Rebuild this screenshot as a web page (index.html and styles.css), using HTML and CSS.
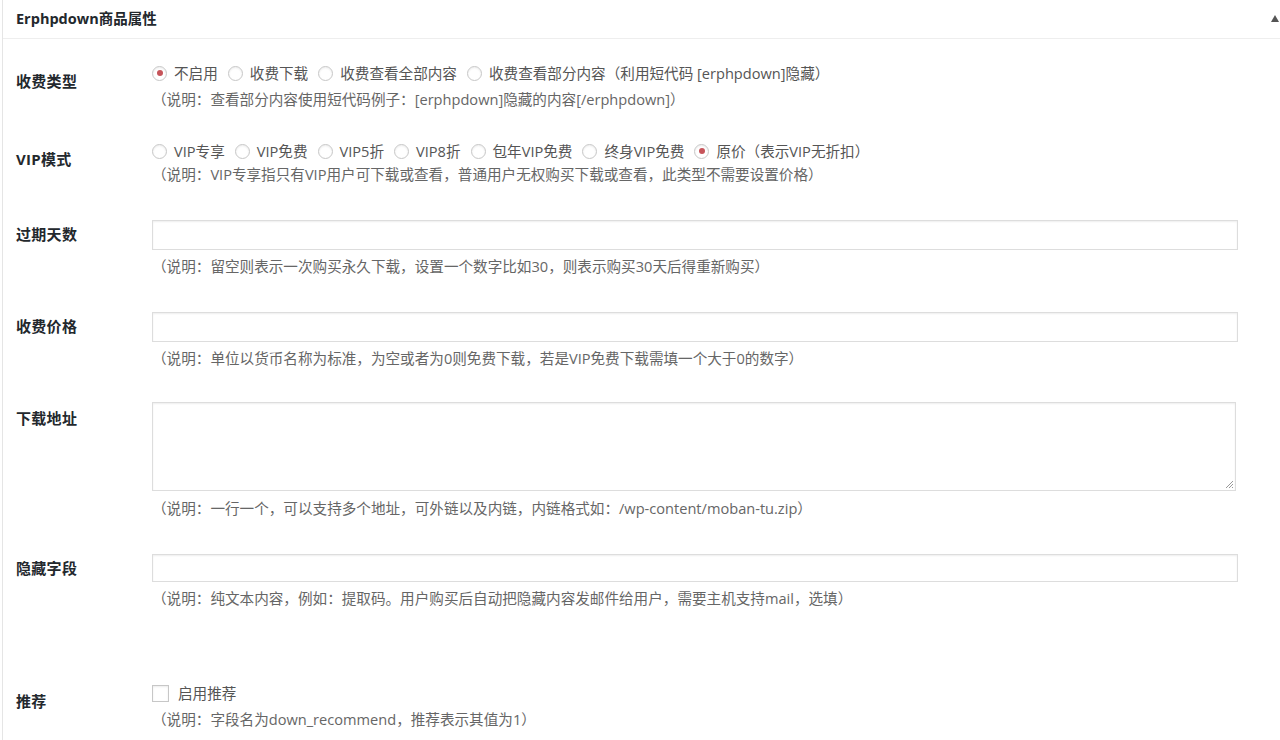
FILE: index.html
```html
<!DOCTYPE html>
<html lang="zh-CN">
<head>
<meta charset="utf-8">
<title>Erphpdown商品属性</title>
<link rel="stylesheet" href="styles.css">
</head>
<body>
<div class="postbox">
  <div class="hndle">
    <h2 class="title">Erphpdown商品属性</h2>
    <svg class="toggle" width="8" height="7" viewBox="0 0 8 7"><path d="M4 0 L8 7 L0 7 Z" fill="#555"/></svg>
  </div>
  <div class="inside">
    <div class="row">
      <div class="th">收费类型</div>
      <div class="td">
        <div class="options">
          <label class="opt"><span class="radio checked"></span>不启用</label>
          <label class="opt"><span class="radio"></span>收费下载</label>
          <label class="opt"><span class="radio"></span>收费查看全部内容</label>
          <label class="opt"><span class="radio"></span>收费查看部分内容（利用短代码 [erphpdown]隐藏）</label>
        </div>
        <p class="desc">（说明：查看部分内容使用短代码例子：[erphpdown]隐藏的内容[/erphpdown]）</p>
      </div>
    </div>
    <div class="row">
      <div class="th">VIP模式</div>
      <div class="td">
        <div class="options">
          <label class="opt"><span class="radio"></span>VIP专享</label>
          <label class="opt"><span class="radio"></span>VIP免费</label>
          <label class="opt"><span class="radio"></span>VIP5折</label>
          <label class="opt"><span class="radio"></span>VIP8折</label>
          <label class="opt"><span class="radio"></span>包年VIP免费</label>
          <label class="opt"><span class="radio"></span>终身VIP免费</label>
          <label class="opt"><span class="radio checked"></span>原价（表示VIP无折扣）</label>
        </div>
        <p class="desc tight">（说明：VIP专享指只有VIP用户可下载或查看，普通用户无权购买下载或查看，此类型不需要设置价格）</p>
      </div>
    </div>
    <div class="row">
      <div class="th">过期天数</div>
      <div class="td">
        <div class="field"></div>
        <p class="desc">（说明：留空则表示一次购买永久下载，设置一个数字比如30，则表示购买30天后得重新购买）</p>
      </div>
    </div>
    <div class="row">
      <div class="th">收费价格</div>
      <div class="td">
        <div class="field"></div>
        <p class="desc">（说明：单位以货币名称为标准，为空或者为0则免费下载，若是VIP免费下载需填一个大于0的数字）</p>
      </div>
    </div>
    <div class="row">
      <div class="th">下载地址</div>
      <div class="td">
        <div class="field area"><svg class="grip" width="10" height="10" viewBox="0 0 10 10"><path d="M9 2 L2 9 M9 5 L5 9 M9 8 L8 9" stroke="#999" stroke-width="1" fill="none"/></svg></div>
        <p class="desc">（说明：一行一个，可以支持多个地址，可外链以及内链，内链格式如：/wp-content/moban-tu.zip）</p>
      </div>
    </div>
    <div class="row">
      <div class="th">隐藏字段</div>
      <div class="td">
        <div class="field short"></div>
        <p class="desc">（说明：纯文本内容，例如：提取码。用户购买后自动把隐藏内容发邮件给用户，需要主机支持mail，选填）</p>
      </div>
    </div>
    <div class="spacer"></div>
    <div class="row">
      <div class="th">推荐</div>
      <div class="td">
        <div class="options">
          <label class="opt"><span class="check"></span>启用推荐</label>
        </div>
        <p class="desc">（说明：字段名为down_recommend，推荐表示其值为1）</p>
      </div>
    </div>
  </div>
</div>
</body>
</html>
```

FILE: styles.css
```css
* { box-sizing: border-box; }
html, body { margin: 0; padding: 0; background: #fff; }
body {
  font-family: "Open Sans", "Noto Sans CJK SC", sans-serif;
  color: #444;
  overflow: hidden;
}
.postbox {
  margin-left: 2px;
  border-left: 1px solid #e5e5e5;
  height: 740px;
}
.hndle {
  height: 39px;
  border-bottom: 1px solid #eee;
  display: flex;
  align-items: center;
  justify-content: space-between;
  padding-left: 13px;
}
.title {
  margin: 0;
  font-size: 14.5px;
  font-weight: 700;
  color: #23282d;
  line-height: 20px;
}
.toggle {
  margin-right: 1px;
  margin-top: -2px;
  flex: none;
}
.inside {
  padding: 8px 0 0 13px;
}
.row {
  display: flex;
}
.th {
  width: 136px;
  flex: none;
  padding-top: 25px;
  font-size: 15px;
  line-height: 18px;
  font-weight: 700;
  color: #23282d;
  letter-spacing: 0.3px;
}
.td {
  flex: 1;
  padding: 15px 0;
}
.options {
  display: flex;
  flex-wrap: wrap;
  height: 22px;
  align-items: center;
}
.opt {
  display: flex;
  align-items: center;
  font-size: 14.6px;
  line-height: 22px;
  color: #555;
  margin-right: 10px;
  white-space: nowrap;
}
.radio {
  width: 15px;
  height: 15px;
  border: 1px solid #c7c7c7;
  border-radius: 50%;
  margin-right: 7px;
  background: #fff;
  box-shadow: inset 0 1px 2px rgba(0,0,0,0.08);
  position: relative;
  flex: none;
}
.radio.checked::after {
  content: "";
  position: absolute;
  left: 3.5px;
  top: 3.5px;
  width: 6px;
  height: 6px;
  border-radius: 50%;
  background: #c6545a;
}
.check {
  width: 17px;
  height: 17px;
  border: 1px solid #c7c7c7;
  margin-right: 9px;
  box-shadow: inset 0 1px 2px rgba(0,0,0,0.08);
  flex: none;
}
.desc {
  margin: 4px 0 0;
  font-size: 14.6px;
  line-height: 22px;
  color: #666;
}
.desc.tight { margin-top: 1px; }
.field {
  margin-top: 5px;
  width: 1086px;
  height: 30px;
  border: 1px solid #ddd;
  box-shadow: inset 0 1px 2px rgba(0,0,0,0.07);
  margin-bottom: 5px;
  position: relative;
}
.field + .desc { margin-top: 0; }
.field.area {
  margin-top: 3px;
  width: 1084px;
  height: 89px;
  margin-bottom: 6px;
}
.field.short { height: 28px; }
.grip {
  position: absolute;
  right: 1px;
  bottom: 1px;
}
.spacer { height: 43px; }
```
